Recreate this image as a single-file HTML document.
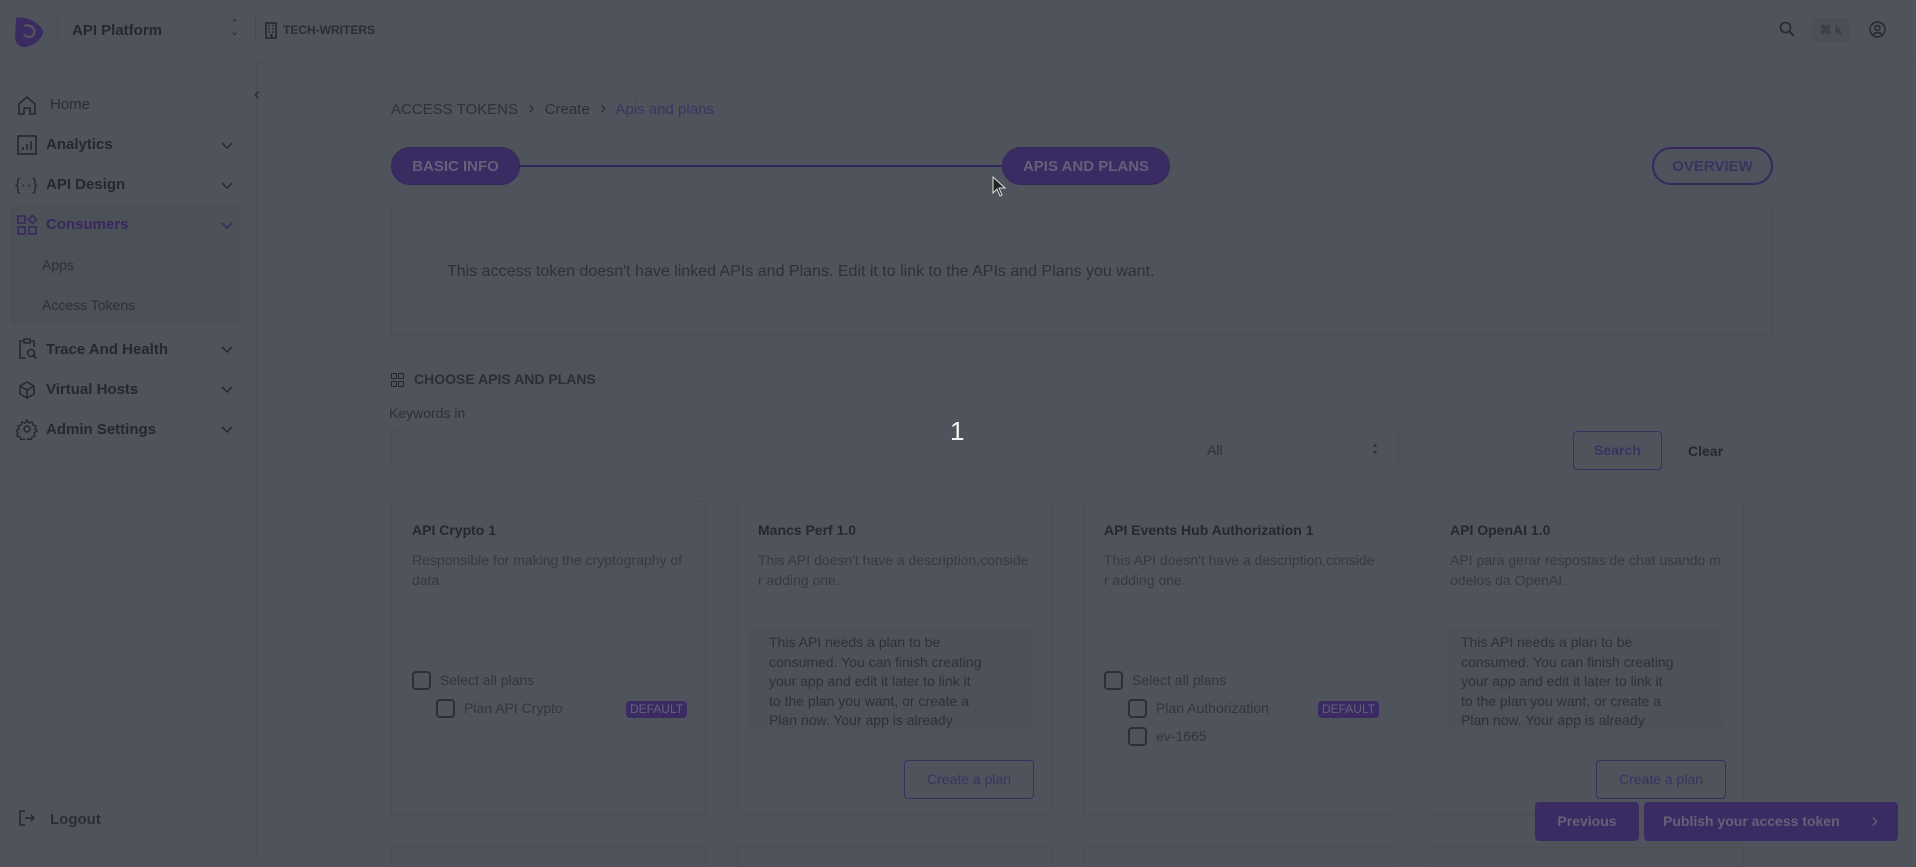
<!DOCTYPE html>
<html><head><meta charset="utf-8"><style>
*{box-sizing:border-box;margin:0;padding:0}
body{width:1916px;height:860px;overflow:hidden;background:#4f535b;font-family:"Liberation Sans",sans-serif;color:#25282e;position:relative}
.a{position:absolute;white-space:nowrap}
.nav{font-size:15px;font-weight:bold;color:#25282e}
.ic{position:absolute;width:22px;height:22px}
.chev{position:absolute;left:220px;width:14px;height:14px}
.pill{position:absolute;background:#3a2c62;color:#656079;font-weight:bold;font-size:15px;border-radius:20px;display:flex;align-items:center;justify-content:center;border:1px solid #34285a}
.card{position:absolute;top:501px;width:315px;height:315px;border:1px solid #4a4e55;border-radius:3px}
.ct{position:absolute;left:20px;top:20px;font-size:14px;font-weight:bold;color:#25282e}
.cd{position:absolute;left:20px;top:48px;width:275px;font-size:14px;line-height:20px;color:#363941;white-space:normal;word-break:break-all}
.cb{position:absolute;width:19px;height:19px;border:2px solid #2c2f36;border-radius:4px}
.pl{position:absolute;font-size:14px;color:#33363d}
.badge{position:absolute;width:61px;height:17px;background:#3a2c62;color:#656079;font-size:12px;border-radius:4px;text-align:center;line-height:17px}
.need{position:absolute;left:11px;top:125px;width:285px;height:101px;overflow:hidden;padding:6px 50px 0 20px;font-size:14px;line-height:19.5px;color:#2e3137;border-radius:3px;background:#4d5159;white-space:normal}
.cp{position:absolute;left:166px;top:258px;width:130px;height:39px;border:1px solid #3a2e62;border-radius:4px;color:#3a3260;font-size:14px;text-align:center;line-height:37px}
</style></head><body>
<div class="a" style="left:0;top:62px;width:1916px;border-top:1px dotted #474b52"></div>
<svg class="a" style="left:10px;top:14px" width="36" height="36" viewBox="0 0 36 36"><path d="M6 4 C14 2 26 6 33 16 C34 22 28 30 16 33 C10 34 6 30 5 24 Z" fill="#3a2c62"/><path d="M14 12 C20 10 26 14 24 20 C22 24 16 24 14 20" fill="none" stroke="#4f535b" stroke-width="2.5"/></svg>
<div class="a" style="left:57px;top:18px;height:26px;border-left:1px solid #474b52"></div>
<div class="a" style="left:72px;top:22px;font-size:15px;font-weight:bold">API Platform</div>
<div class="a" style="left:230px;top:20px;font-size:11px;color:#2a2d33;line-height:8px">⌃<br>⌄</div>
<div class="a" style="left:255px;top:16px;height:26px;border-left:1px solid #474b52"></div>
<svg class="a" style="left:265px;top:22px" width="12" height="17" viewBox="0 0 12 17"><rect x="1" y="1" width="10" height="15" fill="none" stroke="#25282e" stroke-width="1.6"/><path d="M3 4h2M7 4h2M3 7h2M7 7h2M3 10h2M7 10h2M5 13h2v3" stroke="#25282e" stroke-width="1.3"/></svg>
<div class="a" style="left:283px;top:23px;font-size:12px;font-weight:bold;color:#2a2d33">TECH-WRITERS</div>
<svg class="a" style="left:1779px;top:21px" width="16" height="16" viewBox="0 0 16 16"><circle cx="6.5" cy="6.5" r="5" fill="none" stroke="#25282e" stroke-width="1.6"/><path d="M10 10l5 5" stroke="#25282e" stroke-width="1.6"/></svg>
<div class="a" style="left:1812px;top:18px;width:37px;height:24px;background:#4b4f57;border-radius:3px;font-size:12px;font-weight:bold;color:#373b43;text-align:center;line-height:24px">⌘ k</div>
<svg class="a" style="left:1869px;top:21px" width="17" height="17" viewBox="0 0 17 17"><circle cx="8.5" cy="8.5" r="7.5" fill="none" stroke="#25282e" stroke-width="1.4"/><circle cx="8.5" cy="7" r="2.5" fill="none" stroke="#25282e" stroke-width="1.4"/><path d="M4 14c1-3 8-3 9 0" fill="none" stroke="#25282e" stroke-width="1.4"/></svg>
<div class="a" style="left:256px;top:63px;height:797px;border-left:1px dotted #474b52"></div>
<div class="a" style="left:246px;top:84px;width:22px;height:22px;font-size:18px;color:#25282e;text-align:center;line-height:20px">‹</div>
<div class="a" style="left:10px;top:205px;width:230px;height:120px;background:#4c5057;border-radius:8px"></div>
<svg class="ic" style="left:16px;top:94px" viewBox="0 0 22 22"><path d="M3 10l8-7 8 7v10h-5v-6h-6v6H3z" fill="none" stroke="#25282e" stroke-width="1.6"/></svg>
<div class="a nav" style="left:50px;top:96px;font-weight:normal;color:#2b2e34">Home</div>
<svg class="ic" style="left:16px;top:134px" viewBox="0 0 22 22"><rect x="2" y="2" width="18" height="18" fill="none" stroke="#25282e" stroke-width="1.6"/><path d="M7 16v-3M11 16v-6M15 16v-9" stroke="#25282e" stroke-width="1.6"/></svg>
<div class="a nav" style="left:46px;top:136px">Analytics</div>
<div class="a nav" style="left:15px;top:175px;font-weight:normal;font-size:17px">{··}</div>
<div class="a nav" style="left:46px;top:176px">API Design</div>
<svg class="ic" style="left:16px;top:214px" viewBox="0 0 22 22"><rect x="2" y="2" width="7" height="7" fill="none" stroke="#37295e" stroke-width="1.6"/><rect x="2" y="13" width="7" height="7" fill="none" stroke="#37295e" stroke-width="1.6"/><rect x="13" y="13" width="7" height="7" fill="none" stroke="#37295e" stroke-width="1.6"/><path d="M16.5 1.5l4 4-4 4-4-4z" fill="none" stroke="#37295e" stroke-width="1.6"/></svg>
<div class="a nav" style="left:46px;top:216px;color:#37295e">Consumers</div>
<div class="a" style="left:42px;top:257px;font-size:14px;color:#2e3137">Apps</div>
<div class="a" style="left:42px;top:297px;font-size:14px;color:#2e3137">Access Tokens</div>
<svg class="ic" style="left:16px;top:338px" viewBox="0 0 22 22"><path d="M8 3H4v17h6M14 3h4v6" fill="none" stroke="#25282e" stroke-width="1.6"/><rect x="8" y="1" width="6" height="4" fill="none" stroke="#25282e" stroke-width="1.4"/><circle cx="15" cy="15" r="3.5" fill="none" stroke="#25282e" stroke-width="1.6"/><path d="M17.5 17.5l3 3" stroke="#25282e" stroke-width="1.6"/></svg>
<div class="a nav" style="left:46px;top:341px">Trace And Health</div>
<svg class="ic" style="left:16px;top:379px" viewBox="0 0 22 22"><path d="M11 3l7 4v8l-7 4-7-4V7z M4 7l7 4 7-4 M11 11v8" fill="none" stroke="#25282e" stroke-width="1.5"/></svg>
<div class="a nav" style="left:46px;top:381px">Virtual Hosts</div>
<svg class="ic" style="left:16px;top:418px" viewBox="0 0 22 22"><circle cx="11" cy="11" r="3" fill="none" stroke="#25282e" stroke-width="1.5"/><path d="M11 2l2 3 3-1 1 3 3 1-1 3 2 2-3 2 1 3-3 1-1 3-3-1-2 3-2-3-3 1-1-3-3-1 1-3-2-2 3-2-1-3 3-1 1-3 3 1z" fill="none" stroke="#25282e" stroke-width="1.4"/></svg>
<div class="a nav" style="left:46px;top:421px">Admin Settings</div>
<svg class="chev" style="top:138px" viewBox="0 0 14 14"><path d="M2 5l5 5 5-5" fill="none" stroke="#25282e" stroke-width="1.5"/></svg>
<svg class="chev" style="top:178px" viewBox="0 0 14 14"><path d="M2 5l5 5 5-5" fill="none" stroke="#25282e" stroke-width="1.5"/></svg>
<svg class="chev" style="top:218px" viewBox="0 0 14 14"><path d="M2 5l5 5 5-5" fill="none" stroke="#37295e" stroke-width="1.5"/></svg>
<svg class="chev" style="top:342px" viewBox="0 0 14 14"><path d="M2 5l5 5 5-5" fill="none" stroke="#25282e" stroke-width="1.5"/></svg>
<svg class="chev" style="top:382px" viewBox="0 0 14 14"><path d="M2 5l5 5 5-5" fill="none" stroke="#25282e" stroke-width="1.5"/></svg>
<svg class="chev" style="top:422px" viewBox="0 0 14 14"><path d="M2 5l5 5 5-5" fill="none" stroke="#25282e" stroke-width="1.5"/></svg>
<svg class="ic" style="left:18px;top:809px;width:18px;height:18px" viewBox="0 0 18 18"><path d="M7 2H2v14h5M7 9h9M13 6l3 3-3 3" fill="none" stroke="#25282e" stroke-width="1.5"/></svg>
<div class="a" style="left:50px;top:811px;font-size:15px;font-weight:bold;color:#2b2e34">Logout</div>
<div class="a" style="left:391px;top:98px;font-size:15px;color:#2e3137">ACCESS TOKENS <span style="font-size:19px;padding:0 6px">›</span> Create <span style="font-size:19px;padding:0 6px">›</span> <span style="color:#3d335f">Apis and plans</span></div>
<div class="a" style="left:515px;top:165px;width:490px;border-top:2px solid #30265a"></div>
<div class="pill" style="left:391px;top:147px;width:129px;height:38px">BASIC INFO</div>
<div class="pill" style="left:1002px;top:147px;width:168px;height:38px">APIS AND PLANS</div>
<div class="pill" style="left:1652px;top:147px;width:121px;height:38px;background:none;border:2px solid #36295e;color:#3a3260">OVERVIEW</div>
<svg class="a" style="left:992px;top:176px" width="14" height="22" viewBox="0 0 14 22"><path d="M1 1v16l4-4 3 7 2-1-3-7h6z" fill="#222" stroke="#ddd" stroke-width="1"/></svg>
<div class="a" style="left:391px;top:205px;width:1382px;height:131px;border:1px solid #4a4e55;border-radius:3px"></div>
<div class="a" style="left:447px;top:263px;font-size:16px;color:#2e3137">This access token doesn't have linked APIs and Plans. Edit it to link to the APIs and Plans you want.</div>
<svg class="a" style="left:391px;top:373px" width="13" height="14" viewBox="0 0 13 14"><rect x="0.5" y="0.5" width="5" height="5" fill="none" stroke="#25282e"/><rect x="7.5" y="0.5" width="5" height="5" fill="none" stroke="#25282e"/><rect x="0.5" y="8.5" width="5" height="5" fill="none" stroke="#25282e"/><rect x="7.5" y="8.5" width="5" height="5" fill="none" stroke="#25282e"/></svg>
<div class="a" style="left:414px;top:371px;font-size:14px;font-weight:bold;color:#2b2e34">CHOOSE APIS AND PLANS</div>
<div class="a" style="left:389px;top:405px;font-size:14px;color:#2e3137">Keywords in</div>
<div class="a" style="left:391px;top:430px;width:1008px;height:40px;border:1px solid #4a4e55;border-radius:3px"></div>
<div class="a" style="left:1186px;top:432px;height:36px;border-left:1px solid #4a4e55"></div>
<div class="a" style="left:1207px;top:442px;font-size:14px;color:#2e3137">All</div>
<div class="a" style="left:1373px;top:441px;font-size:8px;line-height:8px;color:#2e3137">▴<br>▾</div>
<div class="a" style="left:950px;top:416px;font-size:26px;color:#f4f4f4">1</div>
<div class="a" style="left:1573px;top:431px;width:89px;height:39px;border:1px solid #3a2e62;border-radius:4px;color:#3a3260;font-size:14px;font-weight:bold;text-align:center;line-height:37px">Search</div>
<div class="a" style="left:1688px;top:443px;font-size:14px;font-weight:bold;color:#25282e">Clear</div>
<div class="card" style="left:391px">
 <div class="ct">API Crypto 1</div>
 <div class="cd" style="word-break:normal">Responsible for making the cryptography of data</div>
 <div class="cb" style="left:20px;top:169px"></div><div class="pl" style="left:48px;top:170px">Select all plans</div>
 <div class="cb" style="left:44px;top:197px"></div><div class="pl" style="left:72px;top:198px">Plan API Crypto</div>
 <div class="badge" style="left:234px;top:199px">DEFAULT</div>
</div>
<div class="card" style="left:737px">
 <div class="ct">Mancs Perf 1.0</div>
 <div class="cd">This API doesn't have a description,conside<br>r adding one.</div>
 <div class="need">This API needs a plan to be consumed. You can finish creating your app and edit it later to link it to the plan you want, or create a Plan now. Your app is already saved</div>
 <div class="cp">Create a plan</div>
</div>
<div class="card" style="left:1083px">
 <div class="ct">API Events Hub Authorization 1</div>
 <div class="cd">This API doesn't have a description,conside<br>r adding one.</div>
 <div class="cb" style="left:20px;top:169px"></div><div class="pl" style="left:48px;top:170px">Select all plans</div>
 <div class="cb" style="left:44px;top:197px"></div><div class="pl" style="left:72px;top:198px">Plan Authorization</div>
 <div class="badge" style="left:234px;top:199px">DEFAULT</div>
 <div class="cb" style="left:44px;top:225px"></div><div class="pl" style="left:72px;top:226px">ev-1665</div>
</div>
<div class="card" style="left:1429px">
 <div class="ct">API OpenAI 1.0</div>
 <div class="cd">API para gerar respostas de chat usando m<br>odelos da OpenAI.</div>
 <div class="need">This API needs a plan to be consumed. You can finish creating your app and edit it later to link it to the plan you want, or create a Plan now. Your app is already saved</div>
 <div class="cp">Create a plan</div>
</div>
<div class="a" style="left:391px;top:847px;width:315px;height:20px;border:1px solid #4a4e55"></div>
<div class="a" style="left:737px;top:847px;width:315px;height:20px;border:1px solid #4a4e55"></div>
<div class="a" style="left:1083px;top:847px;width:315px;height:20px;border:1px solid #4a4e55"></div>
<div class="a" style="left:1429px;top:847px;width:315px;height:20px;border:1px solid #4a4e55"></div>
<div class="a" style="left:1535px;top:802px;width:104px;height:39px;background:#3a2c62;border-radius:4px;color:#656079;font-size:14px;font-weight:bold;text-align:center;line-height:39px">Previous</div>
<div class="a" style="left:1644px;top:802px;width:254px;height:39px;background:#3a2c62;border-radius:4px;color:#656079;font-size:14px;font-weight:bold;line-height:39px;padding-left:19px">Publish your access token <span style="position:absolute;right:20px;font-size:20px;font-weight:normal">›</span></div>
</body></html>
